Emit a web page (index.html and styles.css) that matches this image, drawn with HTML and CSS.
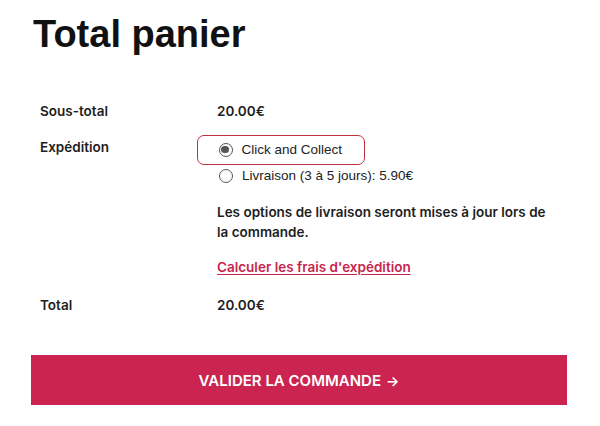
FILE: index.html
```html
<!DOCTYPE html>
<html lang="fr">
<head>
<meta charset="utf-8">
<title>Total panier</title>
<link rel="stylesheet" href="styles.css">
</head>
<body>
<div class="cart-totals">
  <h1 class="title">Total panier</h1>
  <div class="totals">
    <div class="label row-subtotal">Sous-total</div>
    <div class="value row-subtotal">20.00€</div>

    <div class="label row-shipping">Expédition</div>
    <div class="value row-shipping">
      <ul class="options">
        <li class="option selected">
          <span class="radio checked"></span>
          <span class="option-text">Click and Collect</span>
        </li>
        <li class="option">
          <span class="radio"></span>
          <span class="option-text">Livraison (3 à 5 jours): 5.90€</span>
        </li>
      </ul>
      <p class="note">Les options de livraison seront mises à jour lors de la commande.</p>
      <a class="calc-link" href="#">Calculer les frais d'expédition</a>
    </div>

    <div class="label row-total">Total</div>
    <div class="value row-total">20.00€</div>
  </div>
  <a class="checkout" href="#">VALIDER LA COMMANDE <span class="arrow">→</span></a>
</div>
</body>
</html>
```

FILE: styles.css
```css
html, body {
  margin: 0;
  padding: 0;
  background: #ffffff;
}

body {
  font-family: "Inter", "Liberation Sans", sans-serif;
  color: #1e1e1e;
}

.cart-totals {
  padding: 15px 0 0 31px;
  width: 536px;
}

.title {
  margin: 0;
  padding-left: 2px;
  font-family: "Liberation Sans", Arial, sans-serif;
  font-weight: 700;
  font-size: 38px;
  line-height: 38px;
  letter-spacing: 0;
  color: #111111;
}

.totals {
  display: grid;
  grid-template-columns: 177px 1fr;
  margin-top: 48px;
  padding-left: 9px;
  font-size: 13.5px;
  font-weight: 600;
  line-height: 20px;
}

.label, .value {
  font-weight: 600;
}

.row-shipping.label {
  margin-top: 16px;
}

.row-shipping.value {
  margin-top: 14px;
}

.row-total {
  margin-top: 18px;
}

.options {
  list-style: none;
  margin: 0;
  padding: 0;
  font-family: "Liberation Sans", Arial, sans-serif;
  font-weight: 400;
  font-size: 13.5px;
  color: #222222;
}

.option {
  display: flex;
  align-items: center;
  gap: 9px;
  height: 20px;
  padding-left: 2px;
}

.option.selected {
  height: 28px;
  width: 145px;
  margin-left: -20px;
  padding-left: 20.5px;
  border: 1.5px solid #c0303f;
  border-radius: 7px;
  margin-bottom: 1px;
}

.radio {
  box-sizing: border-box;
  width: 14px;
  height: 14px;
  border: 1.5px solid #555555;
  border-radius: 50%;
  background: #ffffff;
  flex: none;
  position: relative;
}

.radio.checked::after {
  content: "";
  position: absolute;
  left: 1.75px;
  top: 1.75px;
  width: 7.5px;
  height: 7.5px;
  border-radius: 50%;
  background: #555555;
}

.note {
  margin: 16px 0 0;
  width: 335px;
  font-weight: 600;
}

.calc-link {
  display: inline-block;
  margin-top: 15px;
  color: #c7254e;
  text-decoration: underline;
  text-underline-offset: 2px;
  font-weight: 600;
}

.checkout {
  display: flex;
  align-items: center;
  justify-content: center;
  gap: 5px;
  margin-top: 40px;
  height: 50px;
  width: 536px;
  background: #cb2450;
  color: #ffffff;
  text-decoration: none;
  font-weight: 600;
  font-size: 15px;
}

.arrow {
  font-size: 14px;
}
```
